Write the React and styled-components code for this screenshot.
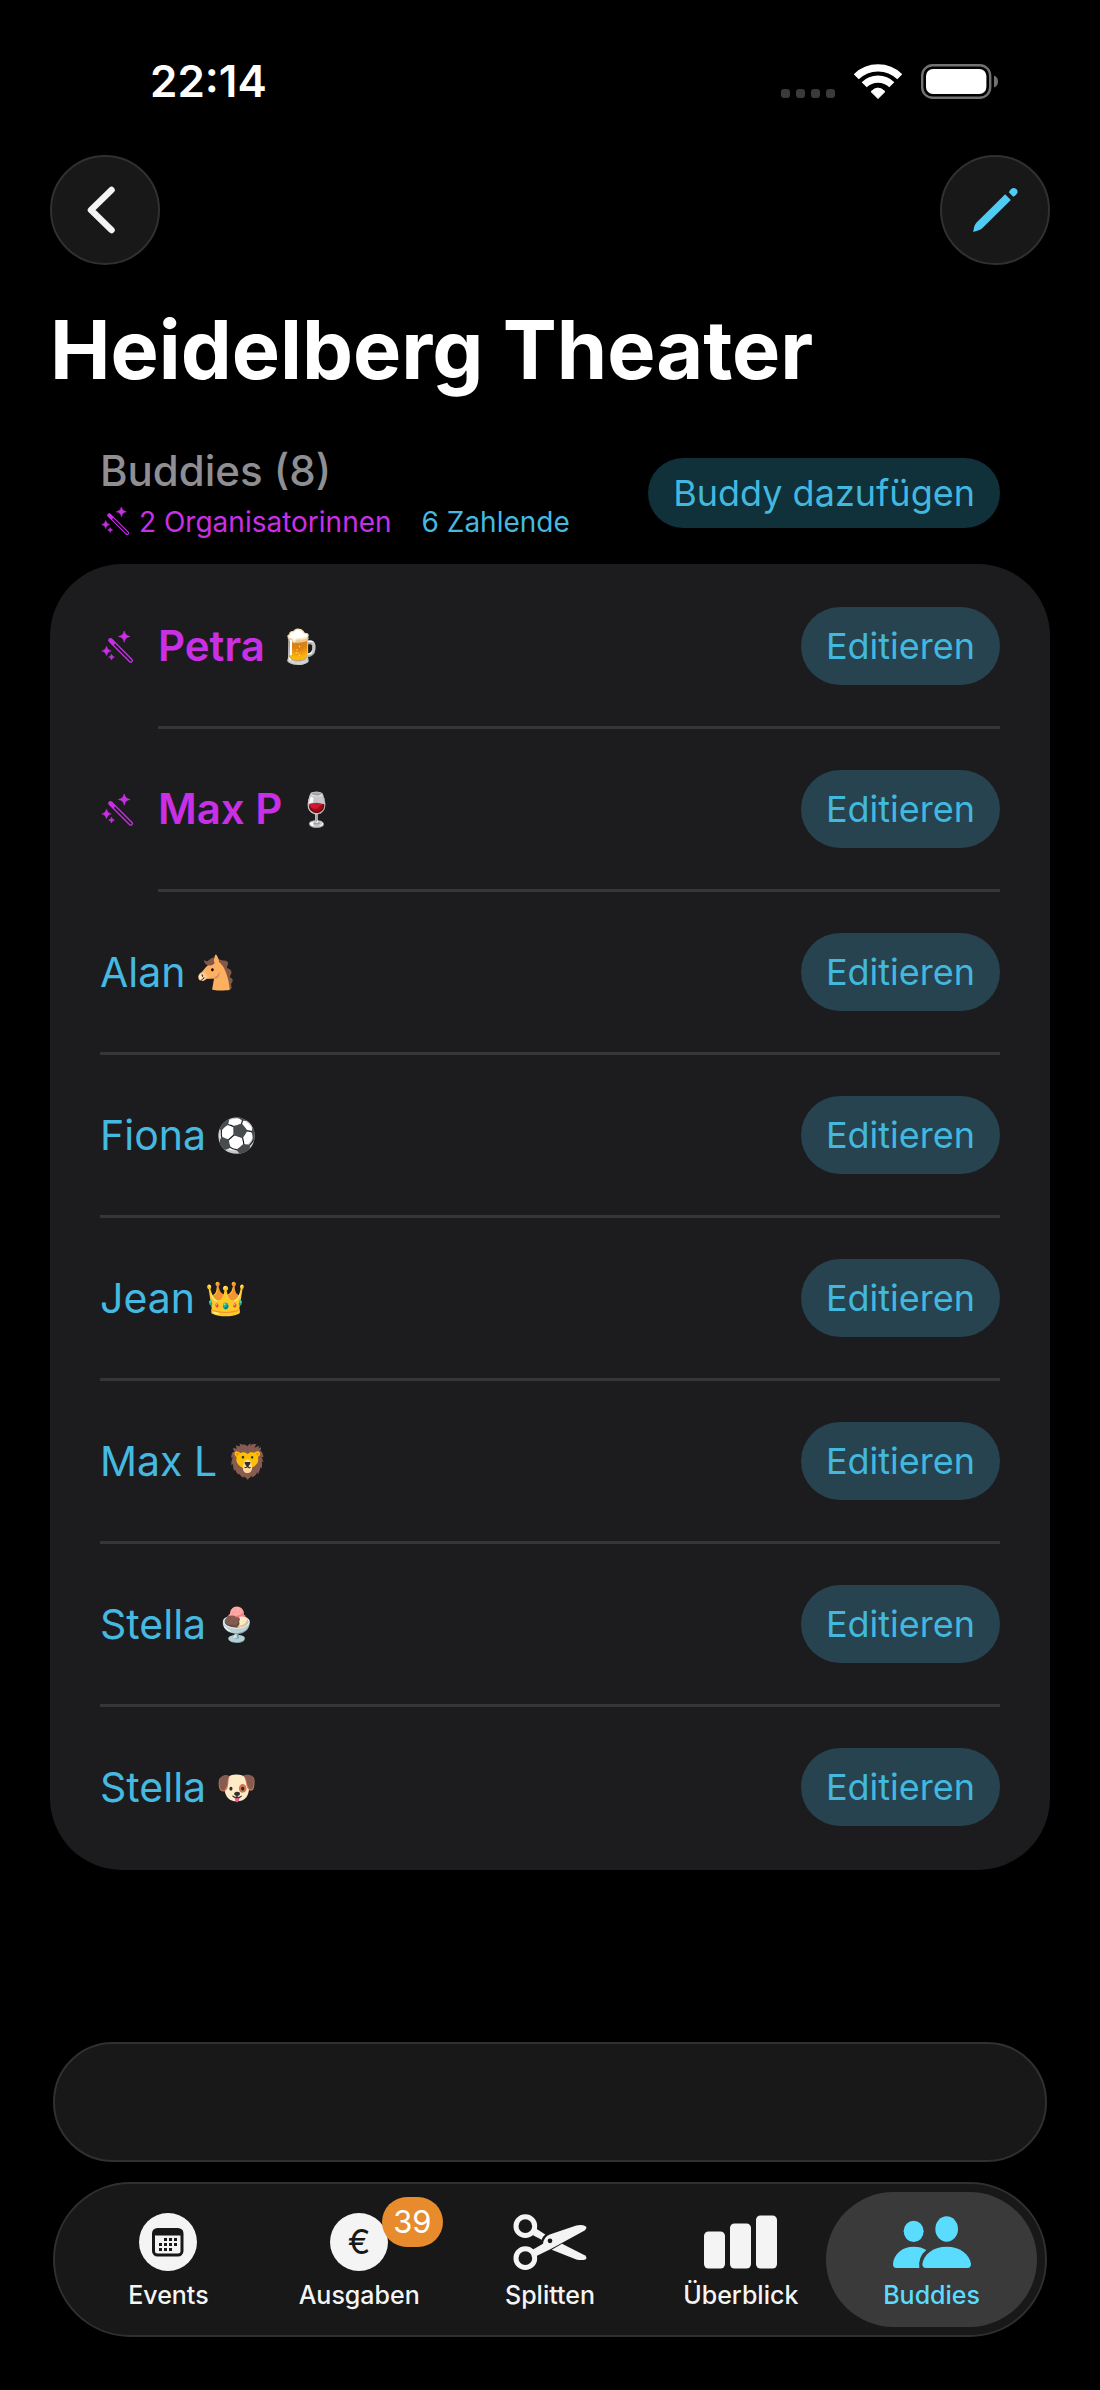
import styled, { createGlobalStyle } from "styled-components"
import { useState } from "react"

const buddies = [
  { name: "Petra", emoji: "🍺", organizer: true },
  { name: "Max P", emoji: "🍷", organizer: true },
  { name: "Alan", emoji: "🐴" },
  { name: "Fiona", emoji: "⚽" },
  { name: "Jean", emoji: "👑" },
  { name: "Max L", emoji: "🦁" },
  { name: "Stella", emoji: "🍨" },
  { name: "Stella", emoji: "🐶" },
]

const GlobalStyle = createGlobalStyle`
  * {
    box-sizing: border-box;
    margin: 0;
    padding: 0;
  }
  body {
    background: #000;
    font-family: Inter, "Liberation Sans", sans-serif;
  }
  button {
    border: none;
    font-family: inherit;
    cursor: pointer;
  }
  svg {
    display: block;
  }
`
const Page = styled.div`
  min-height: 100vh;
  display: flex;
  flex-direction: column;
  color: #fff;
`
const StatusBar = styled.div`
  display: flex;
  justify-content: space-between;
  align-items: center;
  padding: 54px 102px 47px 150px;
`
const Clock = styled.time`
  font-size: 44px;
  font-weight: 600;
  line-height: 54px;
`
const StatusIcons = styled.div`
  display: flex;
  align-items: center;
  gap: 19px;
`
const NavBar = styled.nav`
  display: flex;
  justify-content: space-between;
  padding: 0 50px;
`
const RoundButton = styled.button`
  display: flex;
  justify-content: center;
  align-items: center;
  width: 110px;
  height: 110px;
  border: 2px solid #303030;
  border-radius: 50%;
  background: #181818;
  padding-right: ${(props) => (props.$back ? "8px" : "0")};
`
const Main = styled.main`
  padding: 36px 50px 60px;
`
const Title = styled.h1`
  font-size: 81px;
  font-weight: 700;
  line-height: 98px;
`
const SectionHeader = styled.header`
  display: flex;
  justify-content: space-between;
  align-items: center;
  padding: 47px 50px 25px;
`
const SectionTitle = styled.h2`
  color: #8e8e93;
  font-size: 42px;
  font-weight: 500;
  line-height: 50px;
  margin-bottom: 9px;
`
const Summary = styled.div`
  display: flex;
  gap: 30px;
  font-size: 28px;
  line-height: 34px;
`
const Count = styled.span`
  display: flex;
  align-items: center;
  gap: 9px;
  color: ${(props) => (props.$organizer ? "#c930e6" : "#45b9e0")};
`
const PillButton = styled.button`
  height: ${(props) => (props.$small ? "70px" : "78px")};
  padding: 0 25px;
  border-radius: 39px;
  background: ${(props) => (props.$small ? "#10303a" : "#26434f")};
  color: #43b8df;
  font-size: 36px;
  line-height: 44px;
`
const Card = styled.ul`
  list-style: none;
  border-radius: 72px;
  background: #1c1c1e;
  padding: 2px 50px 0;
`
const Row = styled.li`
  display: flex;
  align-items: center;
`
const RowIcon = styled.div`
  width: 58px;
`
const RowContent = styled.div`
  flex: 1;
  height: 163px;
  display: flex;
  justify-content: space-between;
  align-items: center;
  border-bottom: 3px solid #363638;

  ${Row}:last-child & {
    border-color: transparent;
  }
`
const Name = styled.span`
  display: flex;
  align-items: center;
  gap: ${(props) => (props.$organizer ? "14px" : "10px")};
  font-size: ${(props) => (props.$organizer ? "42px" : "41px")};
  font-weight: ${(props) => (props.$organizer ? 600 : 400)};
  line-height: 50px;
  color: ${(props) => (props.$organizer ? "#c930e6" : "#45b9e0")};
`
const Emoji = styled.span`
  font-size: 33px;
  font-weight: 400;
  line-height: 50px;
`
const Dock = styled.footer`
  display: flex;
  flex-direction: column;
  gap: 20px;
  margin-top: auto;
  padding: 0 53px 53px;
`
const Accessory = styled.div`
  height: 120px;
  border: 2px solid #303030;
  border-radius: 60px;
  background: #181818;
`
const TabBar = styled.nav`
  display: grid;
  grid-template-columns: repeat(5, 1fr);
  border: 2px solid #303030;
  border-radius: 78px;
  background: #181818;
  padding: 8px 18px;
`
const Tab = styled.button`
  display: flex;
  flex-direction: column;
  align-items: center;
  gap: 9px;
  margin: 0 -10px;
  padding: 21px 0 17px;
  border-radius: 68px;
  background: ${(props) => (props.$active ? "#3a3a3a" : "transparent")};
  color: ${(props) => (props.$active ? "#5adcff" : "#f4f4f4")};
  font-size: 25px;
  font-weight: 500;
  line-height: 30px;
`
const TabIcon = styled.span`
  position: relative;
  height: 58px;
  display: flex;
  align-items: center;
`
const Coin = styled.span`
  width: 58px;
  height: 58px;
  border-radius: 50%;
  background: #f4f4f4;
  color: #181818;
  font-size: 34px;
  font-weight: 400;
  line-height: 58px;
`
const Badge = styled.span`
  position: absolute;
  top: -16px;
  left: 52px;
  height: 50px;
  padding: 0 11px;
  border-radius: 25px;
  background: #e88b2d;
  color: #fff;
  font-size: 31px;
  font-weight: 400;
  line-height: 50px;
`

const Signal = () => (
  <svg width="54" height="35" fill="#3a3a3a">
    {[0, 15, 30, 45].map((x) => (
      <rect key={x} x={x} y="25" width="9" height="9" rx="3" />
    ))}
  </svg>
)

const Wifi = () => (
  <svg width="48" height="35" fill="none" stroke="#fff" strokeWidth="7.2">
    <path d="M2.2 12.8A31 31 0 0 1 45.8 12.8" />
    <path d="M10.2 20.8A19.5 19.5 0 0 1 37.8 20.8" />
    <path d="M24 34.5L17 27.6Q24 20.6 31 27.6Z" fill="#fff" stroke="#fff" strokeWidth="1" strokeLinejoin="round" />
  </svg>
)

const Battery = () => (
  <svg width="77" height="35">
    <rect x="1.2" y="1.2" width="68" height="32.6" rx="10.5" fill="none" stroke="#727272" strokeWidth="2.4" />
    <rect x="5" y="5" width="60.4" height="25" rx="7" fill="#fff" />
    <path d="M73 11.5Q77 13 77 17.5Q77 22 73 23.5Z" fill="#727272" />
  </svg>
)

const Chevron = () => (
  <svg width="28" height="48" fill="none" stroke="#f4f4f4" strokeWidth="6.5" strokeLinecap="round" strokeLinejoin="round">
    <path d="M24.5 4L4 24L24.5 44" />
  </svg>
)

const Pencil = () => (
  <svg width="45" height="44" viewBox="695 447 134 132" fill="#4dccf5">
    <path d="M695 579L698 563Q700 556 706 550L791 466L808 483L723 567Q717 572 711 574Z" />
    <path d="M802 460L806 453Q816 442 825 451Q833 460 822 469L815 473Z" />
  </svg>
)

const Wand = ({ size }) => (
  <svg width={size} height={size} viewBox="17 35 94 94" fill="#c930e6">
    <g transform="translate(46 60) rotate(45)">
      <rect x="-4" y="-4" width="88" height="9" rx="4" fill="none" stroke="#c930e6" strokeWidth="3.6" />
      <rect x="-4" y="-4" width="20" height="9" rx="4" />
    </g>
    <path d="M84 34Q86 48 100 50Q86 52 84 66Q82 52 68 50Q82 48 84 34Z" stroke="#c930e6" strokeWidth="1.5" />
    <path d="M35 77Q37 88 48 90Q37 92 35 103Q33 92 22 90Q33 88 35 77Z" stroke="#c930e6" strokeWidth="1.5" />
    <path d="M49 99Q50 106 57 107Q50 108 49 115Q48 108 41 107Q48 106 49 99Z" stroke="#c930e6" strokeWidth="1.5" />
  </svg>
)

const Calendar = () => (
  <svg width="58" height="58">
    <circle cx="29" cy="29" r="29" fill="#f4f4f4" />
    <rect x="14.5" y="16.5" width="28.5" height="25.5" rx="4" fill="none" stroke="#181818" strokeWidth="3" />
    <path d="M14 17H43.5V22.5H14Z" fill="#181818" />
    <g fill="#181818">
      {[[26, 25.5], [31, 25.5], [36, 25.5], [21, 30.5], [26, 30.5], [31, 30.5], [36, 30.5], [21, 35.5], [26, 35.5], [31, 35.5]].map(
        ([x, y]) => <rect key={`${x}-${y}`} x={x - 1} y={y - 0.5} width="3" height="3" />
      )}
    </g>
  </svg>
)

const Scissors = () => (
  <svg width="74" height="57" viewBox="40 45 222 170" fill="#f4f4f4">
    <g fill="none" stroke="#f4f4f4" strokeWidth="15">
      <circle cx="77" cy="81" r="28" />
      <circle cx="77" cy="177" r="28" />
    </g>
    <path d="M110 89L137 106Q129 112 126 122L100 108Z" />
    <path d="M156 152L187 134L255 168Q263 174 259 180Q247 185 230 181Z" />
    <path d="M100 151L130 134Q132 114 150 106L230 79Q247 75 259 82Q263 88 255 94L152 150L109 171Z" />
    <circle cx="151" cy="125" r="7" fill="#181818" />
  </svg>
)

const Bars = () => (
  <svg width="74" height="54" fill="#f4f4f4">
    <rect x="0" y="16.5" width="21" height="37" rx="4.5" />
    <rect x="26" y="8.5" width="21" height="45" rx="4.5" />
    <rect x="52" y="0.5" width="21" height="53" rx="4.5" />
  </svg>
)

const People = () => (
  <svg width="78" height="52" viewBox="1000 108 234 156" fill="#5adcff">
    <ellipse cx="1062" cy="154" rx="30" ry="32" />
    <ellipse cx="1161" cy="147" rx="34" ry="38" />
    <path d="M1010 264Q1000 264 1000 252C1002 222 1028 200 1062 200Q1085 200 1100 210Q1075 230 1079 264Z" />
    <path d="M1099 264Q1088 264 1088 252C1092 222 1122 200 1161 200C1200 200 1230 222 1234 252Q1234 264 1223 264Z" />
  </svg>
)

const tabs = [
  { label: "Events", icon: <Calendar /> },
  { label: "Ausgaben", icon: <Coin>€</Coin>, badge: 39 },
  { label: "Splitten", icon: <Scissors /> },
  { label: "Überblick", icon: <Bars /> },
  { label: "Buddies", icon: <People /> },
]

const App = () => {
  const [activeTab, setActiveTab] = useState(4)

  return (
    <Page>
      <GlobalStyle />

      <StatusBar>
        <Clock>22:14</Clock>
        <StatusIcons>
          <Signal />
          <Wifi />
          <Battery />
        </StatusIcons>
      </StatusBar>

      <NavBar>
        <RoundButton $back aria-label="Zurück">
          <Chevron />
        </RoundButton>
        <RoundButton aria-label="Bearbeiten">
          <Pencil />
        </RoundButton>
      </NavBar>

      <Main>
        <Title>Heidelberg Theater</Title>

        <SectionHeader>
          <div>
            <SectionTitle>Buddies (8)</SectionTitle>
            <Summary>
              <Count $organizer>
                <Wand size={30} />2 Organisatorinnen
              </Count>
              <Count>6 Zahlende</Count>
            </Summary>
          </div>
          <PillButton $small>Buddy dazufügen</PillButton>
        </SectionHeader>

        <Card>
          {buddies.map((buddy, i) => (
            <Row key={i}>
              {buddy.organizer && (
                <RowIcon>
                  <Wand size={34} />
                </RowIcon>
              )}
              <RowContent>
                <Name $organizer={buddy.organizer}>
                  {buddy.name}
                  <Emoji>{buddy.emoji}</Emoji>
                </Name>
                <PillButton>Editieren</PillButton>
              </RowContent>
            </Row>
          ))}
        </Card>
      </Main>

      <Dock>
        <Accessory />
        <TabBar>
          {tabs.map((tab, i) => (
            <Tab key={tab.label} $active={i === activeTab} onClick={() => setActiveTab(i)}>
              <TabIcon>
                {tab.icon}
                {tab.badge && <Badge>{tab.badge}</Badge>}
              </TabIcon>
              {tab.label}
            </Tab>
          ))}
        </TabBar>
      </Dock>
    </Page>
  )
}

export default App
